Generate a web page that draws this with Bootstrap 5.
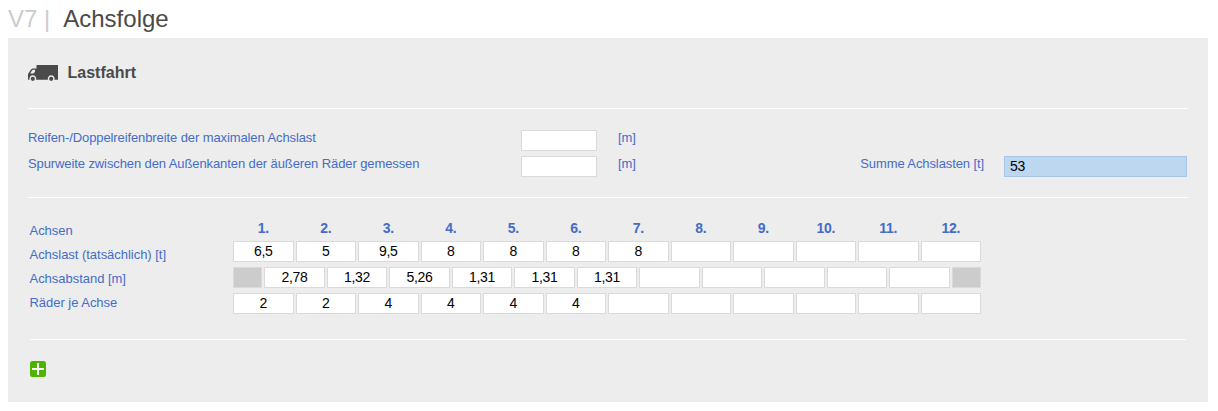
<!DOCTYPE html>
<html lang="de">
<head>
<meta charset="utf-8">
<title>Achsfolge</title>
<link href="https://cdn.jsdelivr.net/npm/bootstrap@5.3.0/dist/css/bootstrap.min.css" rel="stylesheet">
<style>
body{font-family:"Liberation Sans",Arial,sans-serif;font-size:13px;letter-spacing:-.1px;line-height:24px;color:#446cc8;background:#fff}
.page-title{height:38px;padding:0 8px;font-size:24px;letter-spacing:0;line-height:38px;color:#4a4a4a;white-space:pre}
.page-title .code{color:#ccc;margin-right:13px}
.panel{width:1200px;height:364px;margin-left:8px;padding:0 20px;background:#ededed}
.section-head{height:70px;padding-top:1px}
.section-head h2{font-size:16px;letter-spacing:0;line-height:24px;color:#4a4a4a;padding:0 0 2px 9.5px}
.rule{height:1px;background:#fff}
.rule-inset{margin:0 2px}
.measures{height:88px;padding-top:21px}
.measure{height:26px}
.measure .caption{width:493px;line-height:16px}
.measure .unit{width:60px;margin-left:21px;line-height:16px}
.measure .total{width:306px;text-align:right;line-height:16px;margin-right:20px}
.field{height:21px;padding:0 0 1px;border:1px solid #dadada;border-radius:0;background:#fff;color:#000;font-size:14px;letter-spacing:-.35px;line-height:18px;text-align:center;min-width:0}
.field-short{width:76px}
.field-sum{width:183px;background:#bdd7f1;border-color:#a9c5e6;padding-left:5px;text-align:left}
.axles{height:141px;padding-top:21px}
.axle-labels{width:203.5px;margin-left:1.5px;letter-spacing:-.03px}
.axle-grid{width:748px}
.axle-row{display:grid;grid-template-columns:repeat(12,1fr);column-gap:2px;height:26px}
.axle-row.offset-half{grid-template-columns:29.25px repeat(11,1fr) 29.25px}
.axle-row.heads{height:22px;line-height:19px;font-size:14px;letter-spacing:-.3px;font-weight:700;text-align:center}
.blocked{background:#ccc}
.add-btn{margin:21px 0 0 2px}
</style>
</head>
<body>
<h1 class="page-title m-0 fw-normal d-flex"><span class="code">V7 |</span><span>Achsfolge</span></h1>
<main class="panel">
  <div class="section-head d-flex align-items-center">
    <svg width="30" height="17" viewBox="0 0 30 17" fill="#4a4a4a" aria-hidden="true">
      <path fill-rule="evenodd" d="M8.5 0H30V14.8H26.4A3.4 3.4 0 1 0 20 14.8H8A3.4 3.4 0 1 0 1.6 14.8H0V9L3 4.5Q3.6 3.5 5 3.5H8.5ZM7 4.8H5.3Q4.5 4.8 4 5.5L2.2 8.5H5.2L7 7Z"/>
      <circle cx="4.8" cy="13.8" r="2.1"/><circle cx="23.2" cy="13.8" r="2.1"/>
    </svg>
    <h2 class="m-0 fw-bold">Lastfahrt</h2>
  </div>
  <div class="rule"></div>
  <div class="measures">
    <div class="measure d-flex">
      <label class="caption" for="tyre">Reifen-/Doppelreifenbreite der maximalen Achslast</label>
      <input class="field field-short" id="tyre"><span class="unit">[m]</span>
    </div>
    <div class="measure d-flex">
      <label class="caption" for="track">Spurweite zwischen den Außenkanten der äußeren Räder gemessen</label>
      <input class="field field-short" id="track"><span class="unit">[m]</span>
      <label class="total" for="sum">Summe Achslasten [t]</label>
      <input class="field field-sum" id="sum" value="53">
    </div>
  </div>
  <div class="rule"></div>
  <div class="axles d-flex">
    <div class="axle-labels">
      <div>Achsen</div><div>Achslast (tatsächlich) [t]</div><div>Achsabstand [m]</div><div>Räder je Achse</div>
    </div>
    <div class="axle-grid">
      <div class="axle-row heads"><span>1.</span><span>2.</span><span>3.</span><span>4.</span><span>5.</span><span>6.</span><span>7.</span><span>8.</span><span>9.</span><span>10.</span><span>11.</span><span>12.</span></div>
      <div class="axle-row"><input class="field" value="6,5"><input class="field" value="5"><input class="field" value="9,5"><input class="field" value="8"><input class="field" value="8"><input class="field" value="8"><input class="field" value="8"><input class="field"><input class="field"><input class="field"><input class="field"><input class="field"></div>
      <div class="axle-row offset-half"><div class="field blocked"></div><input class="field" value="2,78"><input class="field" value="1,32"><input class="field" value="5,26"><input class="field" value="1,31"><input class="field" value="1,31"><input class="field" value="1,31"><input class="field"><input class="field"><input class="field"><input class="field"><input class="field"><div class="field blocked"></div></div>
      <div class="axle-row"><input class="field" value="2"><input class="field" value="2"><input class="field" value="4"><input class="field" value="4"><input class="field" value="4"><input class="field" value="4"><input class="field"><input class="field"><input class="field"><input class="field"><input class="field"><input class="field"></div>
    </div>
  </div>
  <div class="rule rule-inset"></div>
  <svg class="add-btn d-block" width="16" height="16" viewBox="0 0 16 16" role="img" aria-label="Hinzufügen"><rect width="16" height="16" rx="2.5" fill="#4fb400"/><path d="M8 2v12M2 8h12" stroke="#fff" stroke-width="2"/></svg>
</main>
<script src="https://cdn.jsdelivr.net/npm/bootstrap@5.3.0/dist/js/bootstrap.bundle.min.js"></script>
</body>
</html>
